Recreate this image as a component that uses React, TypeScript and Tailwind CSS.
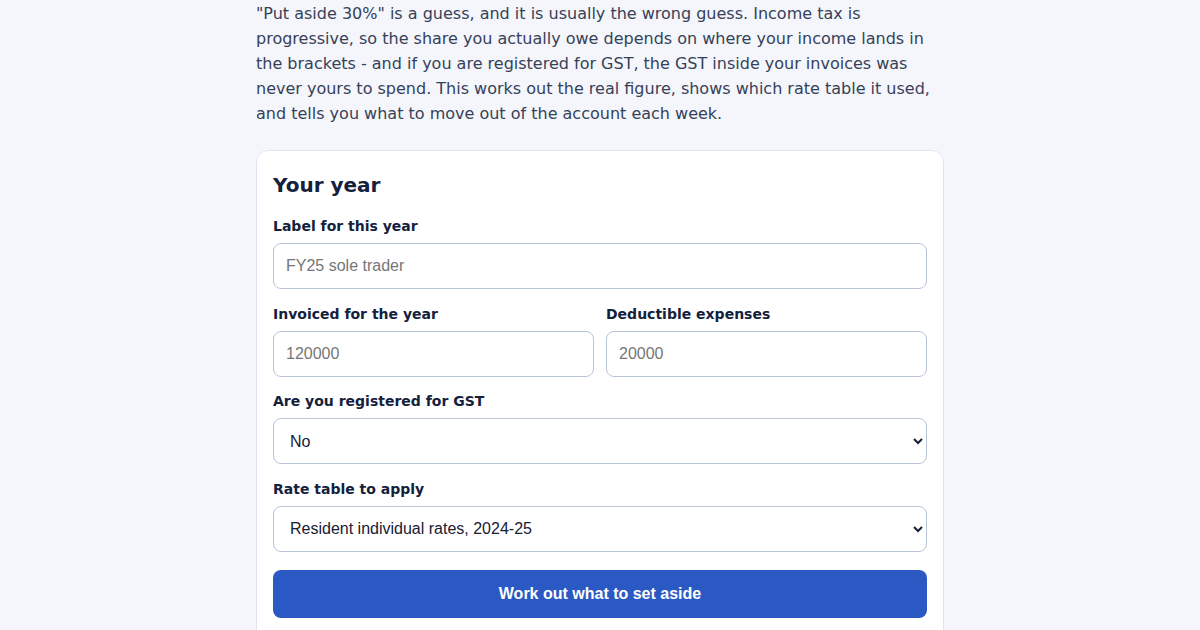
import React from 'react';

const inputClass =
  "block w-full h-[46px] rounded-lg border border-[#b9c3d8] bg-white px-3 font-['Liberation_Sans',Arial,sans-serif] text-base text-[#172033] placeholder:text-[#767676]";

const labelClass = 'block mb-[7px] text-sm leading-5 font-bold text-[#14213d]';

const App: React.FC = () => {
  return (
    <div className="min-h-[630px] bg-[#f4f6fb] pt-px font-['DejaVu_Sans',sans-serif]">
      <div className="mx-auto w-[688px]">
        <p className="mb-6 text-base leading-[25px] text-[#364159]">
          "Put aside 30%" is a guess, and it is usually the wrong guess. Income tax is progressive, so the share
          you actually owe depends on where your income lands in the brackets - and if you are registered for GST,
          the GST inside your invoices was never yours to spend. This works out the real figure, shows which rate
          table it used, and tells you what to move out of the account each week.
        </p>

        <div className="rounded-xl border border-[#e0e5f0] bg-white px-4 pt-5 pb-6">
          <h2 className="mb-[17px] text-xl leading-7 font-bold text-[#14213d]">Your year</h2>

          <div className="flex flex-col gap-[14.5px]">
            <div>
              <label className={labelClass}>Label for this year</label>
              <input className={inputClass} placeholder="FY25 sole trader" />
            </div>

            <div className="grid grid-cols-2 gap-3">
              <div>
                <label className={labelClass}>Invoiced for the year</label>
                <input className={inputClass} placeholder="120000" />
              </div>
              <div>
                <label className={labelClass}>Deductible expenses</label>
                <input className={inputClass} placeholder="20000" />
              </div>
            </div>

            <div>
              <label className={labelClass}>Are you registered for GST</label>
              <select className={inputClass} defaultValue="no">
                <option value="no">No</option>
                <option value="yes">Yes</option>
              </select>
            </div>

            <div>
              <label className={labelClass}>Rate table to apply</label>
              <select className={inputClass} defaultValue="res2425">
                <option value="res2425">Resident individual rates, 2024-25</option>
                <option value="nonres2425">Non-resident rates, 2024-25</option>
              </select>
            </div>
          </div>

          <button className="mt-[18px] block w-full h-12 rounded-lg bg-[#2b59c3] font-['Liberation_Sans',Arial,sans-serif] text-base font-bold text-white">
            Work out what to set aside
          </button>
        </div>
      </div>
    </div>
  );
};

export default App;
